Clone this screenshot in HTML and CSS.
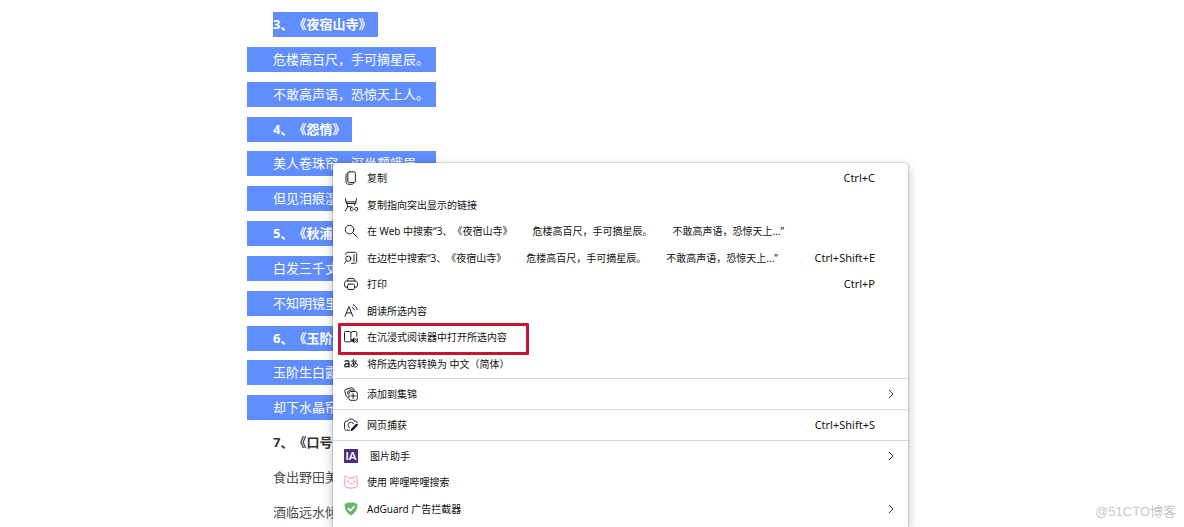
FILE: index.html
```html
<!DOCTYPE html>
<html lang="zh-CN">
<head>
<meta charset="utf-8">
<title>古诗</title>
<link rel="stylesheet" href="styles.css">
</head>
<body>
<article class="poems">
  <h2 class="line"><span class="mark first">3、《夜宿山寺》</span></h2>
  <p class="line"><span class="mark">危楼高百尺，手可摘星辰。</span></p>
  <p class="line"><span class="mark">不敢高声语，恐惊天上人。</span></p>
  <h2 class="line"><span class="mark">4、《怨情》</span></h2>
  <p class="line"><span class="mark">美人卷珠帘，深坐颦蛾眉。</span></p>
  <p class="line"><span class="mark">但见泪痕湿，不知心恨谁。</span></p>
  <h2 class="line"><span class="mark">5、《秋浦歌》</span></h2>
  <p class="line"><span class="mark">白发三千丈，缘愁似个长。</span></p>
  <p class="line"><span class="mark">不知明镜里，何处得秋霜。</span></p>
  <h2 class="line"><span class="mark">6、《玉阶怨》</span></h2>
  <p class="line"><span class="mark">玉阶生白露，夜久侵罗袜。</span></p>
  <p class="line"><span class="mark">却下水晶帘，玲珑望秋月。</span></p>
  <h2 class="line plain">7、《口号》</h2>
  <p class="line plain">食出野田美，</p>
  <p class="line plain">酒临远水倾。</p>
</article>

<div class="menu" role="menu">
  <div class="group main">
    <button class="item" role="menuitem">
      <svg class="icon" viewBox="0 0 14 14"><rect x="3.800" y=".8" width="7.600" height="10.800" rx="1.600"/><path d="M3.800 2.300C2.500 2.600 2 3.200 2 4.300v6.400c0 1.700 1 2.600 2.600 2.600h3.200c1 0 1.600-.5 2-1.600"/></svg>
      <span class="label">复制</span><kbd class="keys">Ctrl+C</kbd>
    </button>
    <button class="item" role="menuitem">
      <svg class="icon" viewBox="0 0 14 14"><path d="M1.500.5 2.400 5.500h9.200L12.500.5M2.100 3.900h9.800M3 5.500l.8 3.200h3.400M11 5.500l-.5 1.900M3.800 8.700 1.200 13"/><path d="M8.300 9.400H8a1.700 1.700 0 0 0 0 3.400h.3M11.700 9.400h.3a1.700 1.700 0 0 1 0 3.400h-.3M8.800 11.100h2.400"/></svg>
      <span class="label">复制指向突出显示的链接</span>
    </button>
    <button class="item" role="menuitem">
      <svg class="icon" viewBox="0 0 14 14"><circle cx="5.600" cy="5.600" r="4.300"/><path d="m8.800 8.800 4.300 4.300"/></svg>
      <span class="label">在 Web 中搜索“3、《夜宿山寺》　　危楼高百尺，手可摘星辰。　　不敢高声语，恐惊天上...”</span>
    </button>
    <button class="item" role="menuitem">
      <svg class="icon" viewBox="0 0 14 14"><path d="M1.800 3.800V3.200c0-1.200.7-1.900 1.900-1.900h7.100c1.200 0 1.900.7 1.900 1.900v7.200c0 1.200-.7 1.900-1.900 1.900H7.500M10 3.600v6.600"/><circle cx="4.300" cy="7.700" r="2.600"/><path d="M2.500 9.700.6 12.300"/></svg>
      <span class="label">在边栏中搜索“3、《夜宿山寺》　　危楼高百尺，手可摘星辰。　　不敢高声语，恐惊天上...”</span><kbd class="keys">Ctrl+Shift+E</kbd>
    </button>
    <button class="item" role="menuitem">
      <svg class="icon" viewBox="0 0 14 14"><path d="M3.500 4V2.800c0-.9.500-1.400 1.400-1.400h4.200c.9 0 1.400.5 1.400 1.400V4M3.500 10.200H2c-.9 0-1.400-.5-1.400-1.400V6.200C.6 4.800 1.300 4 2.700 4h8.600c1.400 0 2.100.8 2.100 2.200v2.600c0 .9-.5 1.400-1.400 1.400h-1.500"/><rect x="3.500" y="7.200" width="7" height="5.300" rx="1.300"/></svg>
      <span class="label">打印</span><kbd class="keys">Ctrl+P</kbd>
    </button>
    <button class="item" role="menuitem">
      <svg class="icon" viewBox="0 0 14 14"><path d="M1 12.300 4.900 2.500l3.900 9.800M2.400 8.900h5M8.300 3.500c1 .4 1.700 1.200 2 2.300M9.200.9c2.200.8 3.500 2.300 3.900 4.600"/></svg>
      <span class="label">朗读所选内容</span>
    </button>
    <button class="item boxed" role="menuitem">
      <svg class="icon" viewBox="0 0 14 14"><path d="M6.900 2.700v8.600M6.900 2.700C6.500 1.800 6 1.500 5 1.500H1.500c-.6 0-1 .4-1 1v8.300c0 .6.400 1 1 1H6M6.900 2.700c.4-.9.900-1.200 1.900-1.200h3c.6 0 1 .4 1 1v3.700"/><path class="solid" d="M7.200 9.200h1.200l2.100-1.900v6.200l-2.100-1.900H7.200z"/><path d="M11.800 9.100q.9 1.300 0 2.600M13 8q1.500 2.400 0 4.800"/></svg>
      <span class="label">在沉浸式阅读器中打开所选内容</span>
    </button>
    <button class="item" role="menuitem">
      <svg class="icon" viewBox="0 0 14 14"><path class="bold" d="M1 4.200c1.300-1 4-.9 4 1.200v4.500M5 6.500c-2.400 0-4.300.3-4.300 1.900 0 2 3.200 2.100 4.300-.1"/><path d="M7.200 4.100h5.300M9.300 2.300c-.3 2.500-.2 5 .6 7.500M11.700 5.200c-.5 2.400-1.700 4.400-3.500 4.400-1.700 0-1.300-3.200 2-3.500 4-.4 4.300 3.700.9 4.200"/></svg>
      <span class="label">将所选内容转换为 中文（简体）</span>
    </button>
  </div>
  <div class="group">
    <button class="item" role="menuitem">
      <svg class="icon" viewBox="0 0 14 14"><rect x="4.900" y="4.500" width="8.400" height="8.800" rx="1.800"/><path d="M9.100 6.500v4.800M6.700 8.900h4.800M3.600 10.400c-.9-.2-1.300-.8-1.600-1.800L.8 4.500c-.3-1.200.1-2 1.200-2.400L7.400.8c1.200-.3 2 .2 2.400 1.500M3.500 6.300c0-2.200 1-3.300 3-3.300h4.200"/></svg>
      <span class="label">添加到集锦</span><svg class="arrow" viewBox="0 0 6 10"><path d="m1 1 4 4-4 4"/></svg>
    </button>
  </div>
  <div class="group">
    <button class="item" role="menuitem">
      <svg class="icon" viewBox="0 0 14 14"><path d="M5.500 12.200H2.400C1.200 12.200.6 11.500.6 10.400V5c0-1.200.6-1.800 1.800-1.800h1.300l.9-1.500c.2-.4.500-.6 1-.6h2.800c.5 0 .8.200 1 .6l.9 1.500h1.300c1.200 0 1.800.6 1.800 1.600"/><path d="M5.700 9.900A3 3 0 1 1 9.800 6"/><path class="solid" d="m6.600 13.300.5-2.400 4.800-4.800c1.200-.9 2.500.4 1.600 1.600l-4.700 4.800z"/></svg>
      <span class="label">网页捕获</span><kbd class="keys">Ctrl+Shift+S</kbd>
    </button>
  </div>
  <div class="group extensions">
    <button class="item" role="menuitem">
      <span class="badge">IA</span>
      <span class="label inset">图片助手</span><svg class="arrow" viewBox="0 0 6 10"><path d="m1 1 4 4-4 4"/></svg>
    </button>
    <button class="item" role="menuitem">
      <svg class="icon pink" viewBox="0 0 14 14"><path d="M1.300 1.200c1-.3 2 .6 2.700 1.700h6c.7-1.100 1.700-2 2.700-1.700.5 1 .4 2.400.3 3.300.5 2 .5 4.500-.2 6.500-.4 1.200-1 1.700-2.200 1.800-2.400.3-4.800.3-7.200 0-1.200-.1-1.800-.6-2.200-1.800-.7-2-.7-4.500-.2-6.500-.1-.9-.2-2.300.3-3.300zM3 6.800l1.700-.6M11 6.800l-1.700-.6M5.300 8.700q.8.900 1.700 0 .9.900 1.700 0"/></svg>
      <span class="label">使用 哔哩哔哩搜索</span>
    </button>
    <button class="item" role="menuitem">
      <svg class="icon" viewBox="0 0 14 14"><path class="shield" d="M7 .5c2 0 4.300.4 6.300 1.400 0 2.200.5 7.800-6.300 11.700C.2 9.700.7 4.100.7 1.900 2.700.9 5 .5 7 .5z"/><path class="tick" d="m4.300 6.600 2.100 2.200 3.700-4.200"/></svg>
      <span class="label">AdGuard 广告拦截器</span><svg class="arrow" viewBox="0 0 6 10"><path d="m1 1 4 4-4 4"/></svg>
    </button>
  </div>
</div>
<div class="watermark">@51CTO博客</div>
</body>
</html>
```
FILE: styles.css
```css
*, *::after { box-sizing: border-box; }

body {
  position: relative;
  margin: 0;
  min-height: 100vh;
  background: #fff;
  font-family: "Noto Sans", "Noto Sans CJK SC", sans-serif;
  text-spacing-trim: space-all;
}

.poems {
  display: flex;
  flex-direction: column;
  justify-content: space-between;
  min-height: 100vh;
  padding: 12px 0 2px 247px;
  color: #4d4d4d;
}

.line {
  display: flex;
  margin: 0;
  font-size: 13px;
  font-weight: 400;
  line-height: 25px;
}

h2.line { font-weight: 700; color: #333; }

.mark {
  padding: 0 7px 0 26px;
  background: #608dff;
  color: #fff;
}

.mark.first { margin-left: 26px; padding-left: 0; }

.plain { padding-left: 26px; }

.menu {
  position: absolute;
  top: 163px;
  bottom: 0;
  left: 333px;
  width: 575px;
  padding-top: 2px;
  background: #fff;
  border-radius: 4px 4px 0 0;
  box-shadow: 0 0 2px rgba(0, 0, 0, .4), 0 4px 12px rgba(0, 0, 0, .25);
  clip-path: inset(-20px -20px 0);
}

.group {
  display: grid;
  grid-auto-rows: 1fr;
}

.group + .group {
  height: 31px;
  border-top: 1px solid #dadada;
}

.group.main { height: 213px; padding-bottom: 1px; }

.group.extensions { height: 82px; padding-top: 2px; }

.item {
  position: relative;
  display: flex;
  align-items: center;
  padding: 0 33px 0 11px;
  border: 0;
  background: none;
  color: #111;
  font-family: inherit;
  font-size: 10px;
  text-align: left;
  white-space: nowrap;
}

.boxed::after {
  content: "";
  position: absolute;
  top: -1px;
  left: 5px;
  width: 191px;
  height: 32px;
  border: 3px solid #c8142c;
  border-radius: 1px;
}

.icon {
  width: 14px;
  height: 14px;
  margin-right: 9px;
  fill: none;
  stroke: #222;
  stroke-width: 1;
  stroke-linecap: round;
  stroke-linejoin: round;
}

.icon .solid { fill: #111; stroke: none; }
.icon .bold { stroke-width: 1.3; }
.icon .shield { fill: #68b470; stroke: none; }
.icon .tick { stroke: #fff; stroke-width: 1.5; }
.icon.pink { stroke: #f58cab; }

.badge {
  width: 14px;
  margin-right: 9px;
  background: #4a2f7c;
  color: #fff;
  font-family: Lato, sans-serif;
  font-size: 11px;
  font-weight: 700;
  line-height: 14px;
  text-align: center;
}

.label { flex: 1; padding-bottom: 1px; }

.inset { padding-left: 3px; }

.keys { padding-bottom: 1px; font-family: inherit; font-size: 11px; }

.arrow {
  width: 6px;
  height: 10px;
  margin-right: -19px;
  fill: none;
  stroke: #333;
}

.watermark {
  position: absolute;
  right: 8px;
  bottom: 5px;
  color: #c8c8c8;
  font: 13px/20px "Liberation Sans", "Noto Sans CJK SC", sans-serif;
}
```
